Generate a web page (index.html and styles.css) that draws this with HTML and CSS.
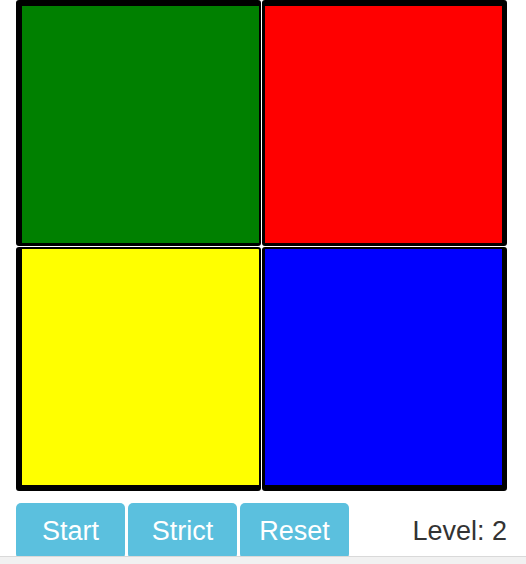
FILE: index.html
```html
<!DOCTYPE html>
<html>
<head>
<meta charset="utf-8">
<title>Simon</title>
<link rel="stylesheet" href="styles.css">
</head>
<body>
<div class="app">
  <div class="board">
    <div class="pad pad-green"></div>
    <div class="pad pad-red"></div>
    <div class="pad pad-yellow"></div>
    <div class="pad pad-blue"></div>
  </div>
  <div class="controls">
    <button class="btn">Start</button>
    <button class="btn">Strict</button>
    <button class="btn">Reset</button>
    <span class="level">Level: 2</span>
  </div>
</div>
<div class="scrollbar"></div>
</body>
</html>
```

FILE: styles.css
```css
html, body {
  margin: 0;
  padding: 0;
  background: #fff;
  font-family: "Liberation Sans", Arial, sans-serif;
  overflow: hidden;
}

.app {
  width: 491px;
  padding: 0 19px 0 16px;
}

.board {
  display: grid;
  grid-template-columns: 245px 245px;
  grid-template-rows: 246px 244px;
  column-gap: 1px;
  row-gap: 1px;
}

.pad {
  box-sizing: border-box;
  border-style: solid;
  border-color: #000;
  border-radius: 3px;
}

.pad-green {
  background: #008000;
  border-width: 6px 2px 3px 6px;
}

.pad-red {
  background: #ff0000;
  border-width: 6px 5px 3px 3px;
}

.pad-yellow {
  background: #ffff00;
  border-width: 2px 2px 6px 6px;
}

.pad-blue {
  background: #0000ff;
  border-width: 2px 5px 6px 3px;
}

.controls {
  display: flex;
  align-items: flex-start;
  gap: 3px;
  margin-top: 12px;
}

.btn {
  width: 109px;
  height: 56px;
  padding: 0;
  border: none;
  border-radius: 5px;
  background: #5bc0de;
  color: #fff;
  font-family: "Liberation Sans", Arial, sans-serif;
  font-size: 27px;
  line-height: 56px;
}

.level {
  margin-left: auto;
  color: #333;
  font-size: 27px;
  line-height: 56px;
}

.scrollbar {
  position: fixed;
  left: 0;
  right: 0;
  bottom: 0;
  height: 7px;
  border-top: 1px solid #d9d9d9;
  background: #f1f1f1;
}
```
